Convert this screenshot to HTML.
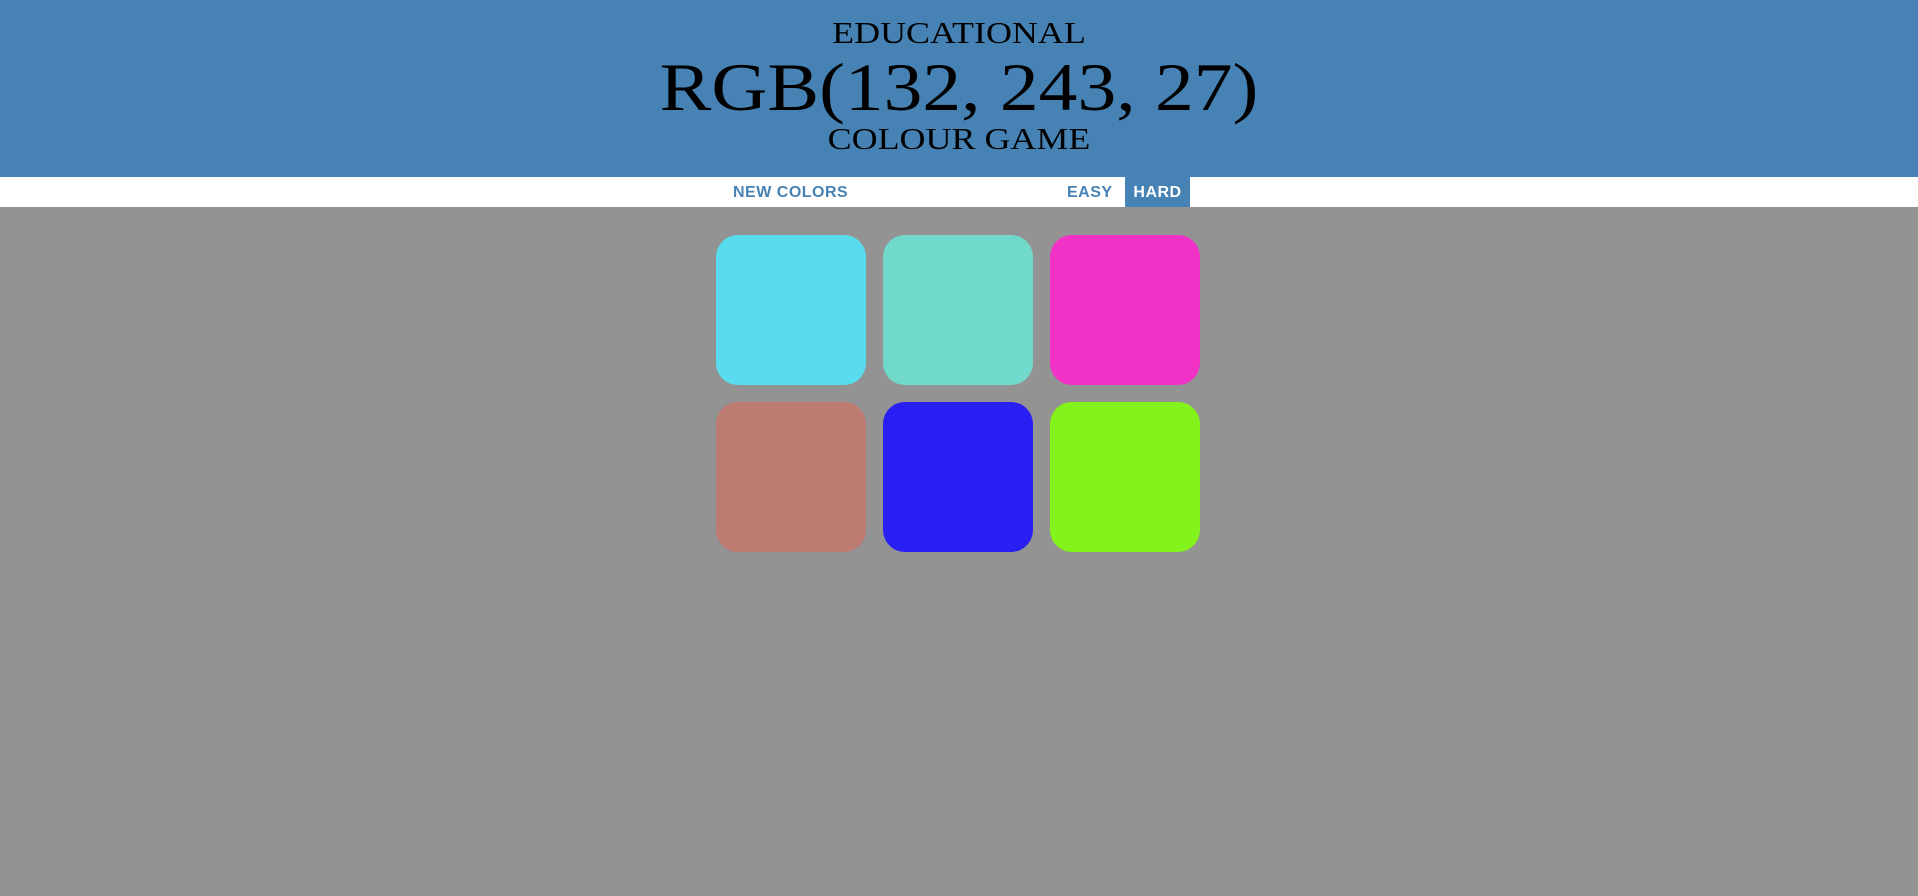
<!DOCTYPE html>
<html><head><meta charset="utf-8"><style>
html,body{margin:0;padding:0;width:1918px;height:896px;overflow:hidden;background:#939393;}
#hdr{position:absolute;left:0;top:0;width:1918px;height:177px;background:#4682b4;color:#000;font-family:"Liberation Serif",serif;text-align:center;}
.t{position:absolute;left:0;width:1918px;text-align:center;white-space:nowrap;line-height:1;}
#nav{position:absolute;left:0;top:177px;width:1918px;height:30px;background:#fff;font-family:"Liberation Sans",sans-serif;font-weight:bold;font-size:16px;color:#4682b4;letter-spacing:0.5px;}
#nav span{position:absolute;top:0;height:30px;line-height:31px;}
.sq{position:absolute;width:150px;height:150px;border-radius:22px;}
</style></head><body>
<div id="hdr">
<div class="t" style="top:17px;font-size:31px;transform:scaleX(1.16);">EDUCATIONAL</div>
<div class="t" style="top:53px;font-size:68px;transform:scaleX(1.14);">RGB(132, 243, 27)</div>
<div class="t" style="top:123px;font-size:31px;transform:scaleX(1.16);">COLOUR GAME</div>
</div>
<div id="nav">
<span style="left:733px;">NEW COLORS</span>
<span style="left:1067px;">EASY</span>
<span style="left:1125px;width:65px;background:#4682b4;color:#fff;text-align:center;">HARD</span>
</div>
<div class="sq" style="left:716px;top:235px;background:#58dcee"></div>
<div class="sq" style="left:883px;top:235px;background:#71d9c9"></div>
<div class="sq" style="left:1050px;top:235px;background:#f232c6"></div>
<div class="sq" style="left:716px;top:402px;background:#bd7b72"></div>
<div class="sq" style="left:883px;top:402px;background:#291ff2"></div>
<div class="sq" style="left:1050px;top:402px;background:#84f31b"></div>
</body></html>
